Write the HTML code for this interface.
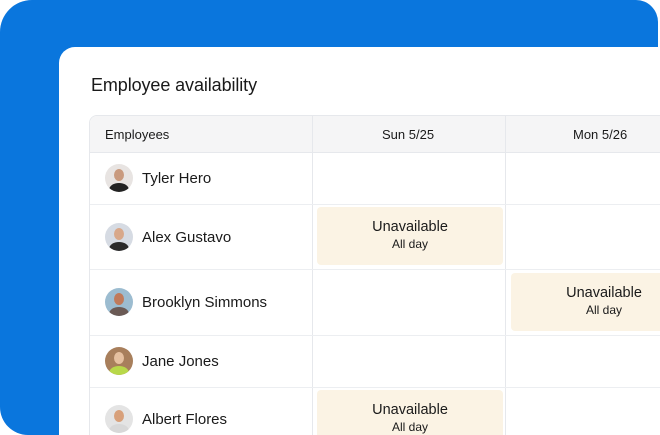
<!DOCTYPE html>
<html style="width:660px;height:435px;overflow:hidden"><head><meta charset="utf-8"><style>
*{margin:0;padding:0;box-sizing:border-box}
body{width:660px;height:435px;overflow:hidden;background:#fff;font-family:"Liberation Sans",sans-serif;color:#1a1a1a;position:relative}
.blue{position:absolute;left:0;top:0;width:658px;height:435px;background:#0a76dd;border-radius:32px 22px 22px 28px}
.card{position:absolute;left:59px;top:47px;width:601px;height:388px;background:#fff;border-radius:16px 0 0 0}
.title{position:absolute;left:91px;top:75px;font-size:18px;letter-spacing:-0.1px}
.tbl{position:absolute;left:89px;top:115px;width:571px;height:320px;border:1px solid #e6e8ec;border-right:0;border-bottom:0;border-radius:8px 0 0 0;overflow:hidden}
.hdr{position:absolute;left:0;top:0;width:100%;height:37px;background:#f5f5f6;border-bottom:1px solid #e6e8ec}
.vl{position:absolute;top:0;bottom:0;width:1px;background:#e6e8ec}
.hl{position:absolute;left:0;right:0;height:1px;background:#eceef1}
.ht{position:absolute;top:11px;font-size:13px}
.row{position:absolute;left:15px;display:flex;align-items:center;font-size:15px}
.av{width:28px;height:28px;border-radius:50%;margin-right:9px;position:relative;overflow:hidden}
.av i{position:absolute;left:9px;top:5px;width:10px;height:12px;border-radius:50%;background:#c99a7e}
.av b{position:absolute;left:4px;top:19px;width:20px;height:14px;border-radius:50%;background:#222}
.un{position:absolute;background:#fbf3e4;border-radius:4px;text-align:center;overflow:hidden}
.un .a{font-size:14.5px;margin-top:12px}
.un .b{font-size:12px;margin-top:2px}
</style></head><body>
<div class="blue"></div>
<div class="card"></div>
<div class="title">Employee availability</div>
<div class="tbl">
 <div class="hdr"></div>
 <div class="vl" style="left:222px"></div>
 <div class="vl" style="left:415px"></div>
 <div class="hl" style="top:88px"></div>
 <div class="hl" style="top:153px"></div>
 <div class="hl" style="top:219px"></div>
 <div class="hl" style="top:271px"></div>
 <div class="ht" style="left:15px">Employees</div>
 <div class="ht" style="left:292px">Sun 5/25</div>
 <div class="ht" style="left:483px">Mon 5/26</div>
 <div class="row" style="top:48px"><div class="av" style="background:#e8e4e2"><i></i><b></b></div>Tyler Hero</div>
 <div class="row" style="top:107px"><div class="av" style="background:#d6dbe3"><i style="background:#d8a88a"></i><b style="background:#2a2a2a"></b></div>Alex Gustavo</div>
 <div class="row" style="top:172px"><div class="av" style="background:#9cbcd0"><i style="background:#c07a5a"></i><b style="background:#6b5a55"></b></div>Brooklyn Simmons</div>
 <div class="row" style="top:231px"><div class="av" style="background:#a87f5c"><i style="background:#e5c0a0"></i><b style="background:#b8d84a"></b></div>Jane Jones</div>
 <div class="row" style="top:289px"><div class="av" style="background:#e4e4e4"><i style="background:#d8a07a"></i><b style="background:#d8d8d8"></b></div>Albert Flores</div>
 <div class="un" style="left:227px;top:91px;width:186px;height:58px"><div class="a">Unavailable</div><div class="b">All day</div></div>
 <div class="un" style="left:421px;top:157px;width:150px;height:58px;border-radius:4px 0 0 4px"><div class="a" style="margin-left:36px">Unavailable</div><div class="b" style="margin-left:36px">All day</div></div>
 <div class="un" style="left:227px;top:274px;width:186px;height:46px;border-radius:4px 4px 0 0"><div class="a">Unavailable</div><div class="b">All day</div></div>
</div>
</body></html>
